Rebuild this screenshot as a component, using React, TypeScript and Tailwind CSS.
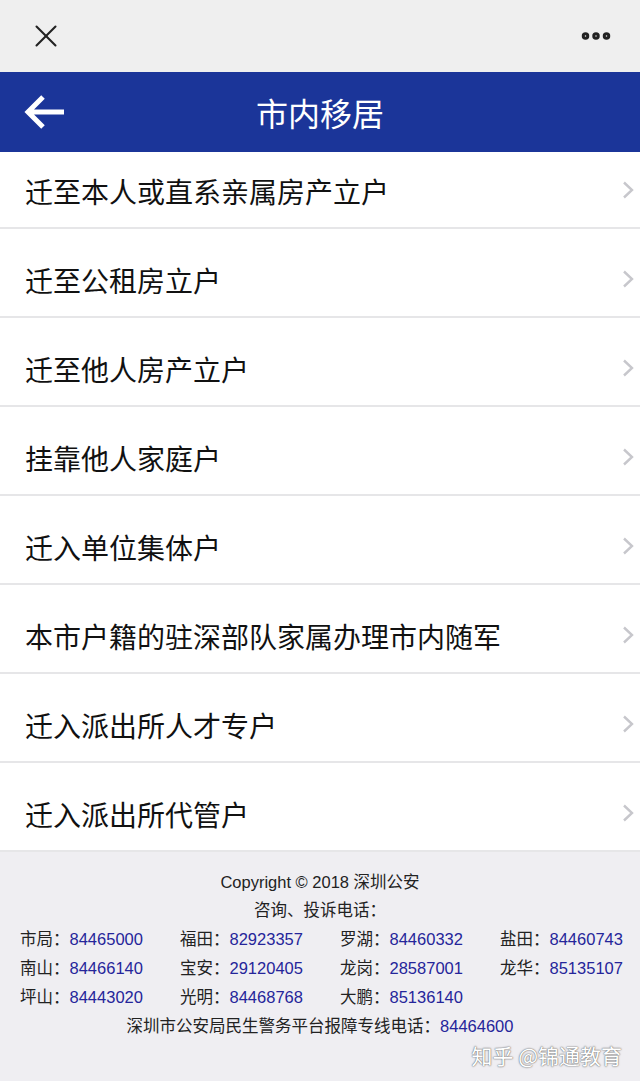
import { X, MoreHorizontal } from "lucide-react";

const ITEMS = [
  "迁至本人或直系亲属房产立户",
  "迁至公租房立户",
  "迁至他人房产立户",
  "挂靠他人家庭户",
  "迁入单位集体户",
  "本市户籍的驻深部队家属办理市内随军",
  "迁入派出所人才专户",
  "迁入派出所代管户",
];

const PHONES = [
  ["市局", "84465000"],
  ["福田", "82923357"],
  ["罗湖", "84460332"],
  ["盐田", "84460743"],
  ["南山", "84466140"],
  ["宝安", "29120405"],
  ["龙岗", "28587001"],
  ["龙华", "85135107"],
  ["坪山", "84443020"],
  ["光明", "84468768"],
  ["大鹏", "85136140"],
];

const FONT = "font-['Liberation_Sans','Noto_Sans_CJK_SC',sans-serif]";

export default function App() {
  return (
    <div className={`relative w-[640px] min-h-[1081px] bg-[#efeef2] ${FONT}`}>
      <div className="flex h-[72px] items-center justify-between bg-[#efefef] pl-[27px] pr-[26px]">
        <X className="h-[38px] w-[38px] text-[#222]" strokeWidth={1.3} />
        <MoreHorizontal className="h-[36px] w-[36px] text-[#222]" strokeWidth={3} />
      </div>

      <div className="relative flex h-[80px] items-center justify-center bg-[#1b3599]">
        <svg className="absolute left-[24px] top-[22px] h-[36px] w-[42px]" viewBox="0 0 42 36" fill="none">
          <path d="M40 18H5M19 3L4 18l15 15" stroke="white" strokeWidth="5" strokeLinecap="butt" />
        </svg>
        <h1 className="text-[32px] text-white font-['Noto_Sans_CJK_SC',sans-serif]">市内移居</h1>
      </div>

      <ul className="bg-white">
        {ITEMS.map((item, index) => (
          <li key={item} className={`${index === 0 ? "pt-[1px]" : "pt-[13px]"} border-b-2 border-[#e6e6e8]`}>
            <div className="flex h-[74px] items-center justify-between pl-[25px] pr-[6px]">
              <span className="pt-[2px] text-[28px] text-[#111] font-['Noto_Sans_CJK_SC',sans-serif]">{item}</span>
              <svg className="h-[18px] w-[12px]" viewBox="0 0 12 18" fill="none">
                <path d="M2 1.5l8 7.5-8 7.5" stroke="#c7c7cc" strokeWidth="2.4" />
              </svg>
            </div>
          </li>
        ))}
      </ul>

      <footer className="pt-[16px] pb-[20px] text-[16.5px] leading-[29px] text-[#222]">
        <p className="text-center">Copyright © 2018 深圳公安</p>
        <p className="-mt-[1px] text-center">咨询、投诉电话：</p>
        <div className="grid grid-cols-[160px_160px_160px_160px] pl-[20px]">
          {PHONES.map(([name, phone]) => (
            <div key={name} className="whitespace-nowrap">
              {name}：<span className="text-[#25259a]">{phone}</span>
            </div>
          ))}
        </div>
        <p className="text-center">
          深圳市公安局民生警务平台报障专线电话：<span className="text-[#25259a]">84464600</span>
        </p>
      </footer>

      <div className="absolute right-[18px] top-[1040px] text-[21px] text-white [text-shadow:0_0_2px_#777,0_0_1px_#555] font-['Noto_Sans_CJK_SC',sans-serif]">
        知乎 @锦通教育
      </div>
    </div>
  );
}
